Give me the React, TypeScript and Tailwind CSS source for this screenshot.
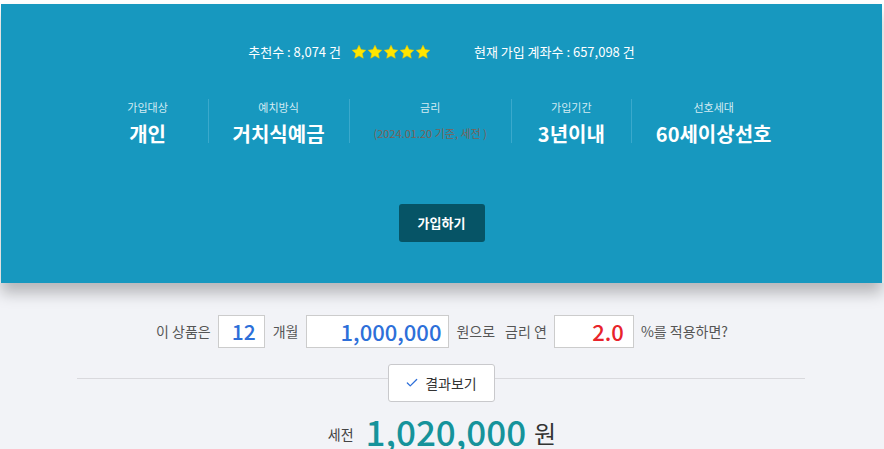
import { Check } from "lucide-react";

const Star = () => (
  <svg viewBox="0 0 24 24" className="w-[16px] h-[16px]">
    <path
      d="M12 1.8l3.1 6.6 7.1.9-5.2 4.9 1.4 7.1L12 17.8l-6.4 3.5 1.4-7.1L1.8 9.3l7.1-.9z"
      fill="#ffe600"
      stroke="#e9c700"
      strokeWidth="0.8"
    />
  </svg>
);

const stats = [
  { label: "가입대상", value: "개인" },
  { label: "예치방식", value: "거치식예금" },
  { label: "금리", value: "", note: "(2024.01.20 기준, 세전 )" },
  { label: "가입기간", value: "3년이내" },
  { label: "선호세대", value: "60세이상선호" },
];

const App = () => {
  return (
    <div
      className="w-[884px] h-[449px] overflow-hidden bg-[#f2f3f7]"
      style={{ fontFamily: '"Noto Sans CJK KR", "Noto Sans", sans-serif' }}
    >
      <div className="bg-white pt-[4px] pl-[1px] pr-[2px]">
        <div className="relative h-[279px] bg-[#1798bf] shadow-[0_10px_14px_rgba(0,0,0,0.25)] flex flex-col items-center">
          {/* top line */}
          <div className="mt-[36px] flex items-center text-[13px] text-white h-[24px]">
            <span>추천수 : 8,074 건</span>
            <div className="flex ml-[10px]">
              <Star />
              <Star />
              <Star />
              <Star />
              <Star />
            </div>
            <span className="ml-[43px]">현재 가입 계좌수 : 657,098 건</span>
          </div>

          {/* stats */}
          <div className="mt-[35px] flex">
            {stats.map((s, i) => (
              <div
                key={s.label}
                className={
                  "min-w-[120px] px-6 flex flex-col items-center h-[44px] " +
                  (i > 0 ? "border-l border-[#3aa9cc]" : "")
                }
              >
                <span className="text-[11px] leading-[14px] text-[#d3ebf3] mt-[1px]">
                  {s.label}
                </span>
                {s.value ? (
                  <span className="mt-[7px] text-[20px] leading-[26px] font-bold text-white whitespace-nowrap">
                    {s.value}
                  </span>
                ) : (
                  <span className="mt-[12px] text-[11px] leading-[14px] text-[#7b6258] whitespace-nowrap">
                    {s.note}
                  </span>
                )}
              </div>
            ))}
          </div>

          <button className="mt-[61px] w-[86px] h-[38px] rounded-[3px] bg-[#065466] text-white text-[13px] font-bold">
            가입하기
          </button>
        </div>
      </div>

      {/* calculator */}
      <div className="mt-[32px] flex items-center justify-center text-[14px] text-[#555] h-[33px]">
        <span>이 상품은</span>
        <div className="ml-[7px] w-[47px] h-[33px] bg-white border border-[#ccc] flex items-center justify-end pr-[8px] text-[21px] text-[#2d6fd9] font-medium">
          12
        </div>
        <span className="ml-[8px]">개월</span>
        <div className="ml-[8px] w-[143px] h-[33px] bg-white border border-[#ccc] flex items-center justify-end pr-[7px] text-[22px] text-[#2d6fd9] font-medium">
          1,000,000
        </div>
        <span className="ml-[7px]">원으로</span>
        <span className="ml-[10px]">금리 연</span>
        <div className="ml-[7px] w-[80px] h-[33px] bg-white border border-[#ccc] flex items-center justify-end pr-[9px] text-[22px] text-[#e8232b] font-medium">
          2.0
        </div>
        <span className="ml-[7px]">%를 적용하면?</span>
      </div>

      <div className="relative mt-[16px] mx-[77px] w-[728px] h-[38px] flex items-center justify-center">
        <div className="absolute left-0 right-0 top-[14px] border-t border-[#d9d9dd]" />
        <button className="relative w-[107px] h-[38px] bg-white border border-[#c9c9cc] rounded-[3px] flex items-center justify-center gap-[6px] text-[14px] text-[#333]">
          <Check className="w-[14px] h-[14px] text-[#2d6fd9]" strokeWidth={2.2} />
          결과보기
        </button>
      </div>

      <div className="mt-[9px] flex items-end justify-center h-[40px]">
        <span className="text-[14px] text-[#444] mb-[6px]">세전</span>
        <span className="ml-[12px] text-[35px] leading-[40px] font-medium text-[#16939b]">
          1,020,000
        </span>
        <span className="ml-[8px] text-[24px] leading-[36px] text-[#333]">원</span>
      </div>
    </div>
  );
};

export default App;
